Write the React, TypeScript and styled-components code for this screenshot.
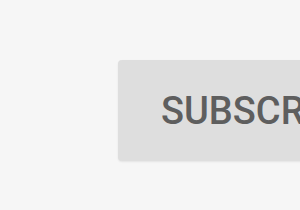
import React from "react";
import styled, { createGlobalStyle } from "styled-components";

const Global = createGlobalStyle`
  html, body { margin: 0; padding: 0; background: #f6f6f6; overflow: hidden; }
`;

const Page = styled.div`
  width: 300px;
  height: 210px;
  padding: 60px 0 0 118px;
  box-sizing: border-box;
  overflow: hidden;
  background: #f6f6f6;
`;

const Button = styled.button`
  display: flex;
  align-items: center;
  height: 101px;
  padding: 0 43px;
  border: none;
  border-radius: 4px;
  background: #dedede;
  color: #5e5e5e;
  font-family: Roboto, "Liberation Sans", sans-serif;
  font-size: 38px;
  font-weight: 500;
  white-space: nowrap;
  box-shadow: 0 1px 2px rgba(0, 0, 0, 0.08);
  cursor: pointer;
`;

export default function App() {
  return (
    <>
      <Global />
      <Page>
        <Button>SUBSCRIBE</Button>
      </Page>
    </>
  );
}
